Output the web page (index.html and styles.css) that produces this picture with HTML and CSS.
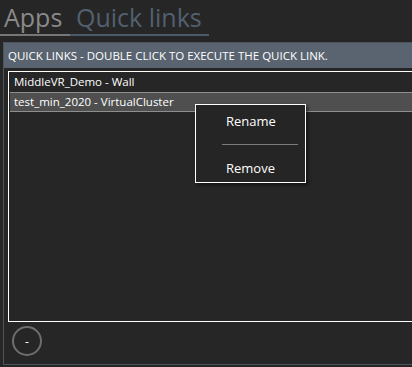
FILE: index.html
```html
<!DOCTYPE html>
<html>
<head>
<meta charset="utf-8">
<link rel="stylesheet" href="styles.css">
</head>
<body>
<div class="tabs">
  <div class="tab tab-apps">Apps</div>
  <div class="tab tab-links">Quick links</div>
</div>
<div class="panel">
  <div class="panel-header">QUICK LINKS - DOUBLE CLICK TO EXECUTE THE QUICK LINK.</div>
  <div class="listbox">
    <div class="item">MiddleVR_Demo - Wall</div>
    <div class="item selected">test_min_2020 - VirtualCluster</div>
  </div>
  <div class="actions">
    <div class="circle-btn">-</div>
  </div>
</div>
<div class="menu">
  <div class="menu-item">Rename</div>
  <div class="menu-sep"></div>
  <div class="menu-item last">Remove</div>
</div>
</body>
</html>
```
FILE: styles.css
```css
html, body {
  margin: 0;
  padding: 0;
  background: #262626;
  overflow: hidden;
  width: 412px;
  height: 367px;
}
body {
  font-family: "Open Sans", "Noto Sans", sans-serif;
  color: #ffffff;
  position: relative;
}
.tabs {
  display: flex;
  height: 36px;
  align-items: flex-end;
}
.tab {
  font-size: 25px;
  line-height: 34px;
  border-bottom: 2px solid;
  box-sizing: border-box;
  white-space: nowrap;
}
.tab-apps {
  color: #8a8a8a;
  border-color: #767676;
  width: 70px;
  padding-left: 4px;
}
.tab-links {
  color: #526070;
  border-color: #4b5a6b;
  width: 139px;
  padding-left: 6px;
}
.panel {
  margin: 6px 0 0 3px;
  width: 420px;
  height: 323px;
  border: 1px solid #4c545d;
  box-sizing: border-box;
  display: flex;
  flex-direction: column;
}
.panel-header {
  background: #5a6470;
  height: 25px;
  line-height: 25px;
  font-size: 11.5px;
  padding-left: 4px;
  color: #ffffff;
  flex-shrink: 0;
}
.listbox {
  margin: 3px 0 0 4px;
  height: 251px;
  border: 1px solid #ffffff;
  border-right: none;
  box-sizing: border-box;
  flex-shrink: 0;
}
.item {
  height: 20px;
  line-height: 20px;
  font-size: 11.5px;
  padding-left: 4px;
  margin-left: 1px;
}
.item.selected {
  background: #4f4f4f;
  border-top: 1px solid #8e8e8e;
  border-bottom: 1px solid #8e8e8e;
  height: 20px;
  line-height: 18px;
  box-sizing: border-box;
  padding-left: 4px;
}
.actions {
  padding: 4px 0 0 8px;
}
.circle-btn {
  width: 30px;
  height: 30px;
  border: 2px solid #6e6e6e;
  border-radius: 50%;
  box-sizing: border-box;
  display: flex;
  align-items: center;
  justify-content: center;
  font-size: 12px;
  color: #ffffff;
}
.menu {
  position: absolute;
  left: 195px;
  top: 104px;
  width: 111px;
  height: 79px;
  box-sizing: border-box;
  background: #252525;
  border: 1px solid #ffffff;
  box-shadow: 2px 2px 3px rgba(0,0,0,0.5);
  display: flex;
  flex-direction: column;
  padding-left: 30px;
}
.menu-item {
  font-size: 13px;
  height: 32px;
  line-height: 32px;
  color: #ffffff;
  flex-shrink: 0;
}
.menu-item.last {
  height: 30px;
}
.menu-sep {
  flex-shrink: 0;
  margin: 7px 7px 7px -4px;
  height: 1px;
  background: #7a7a7a;
}
```
